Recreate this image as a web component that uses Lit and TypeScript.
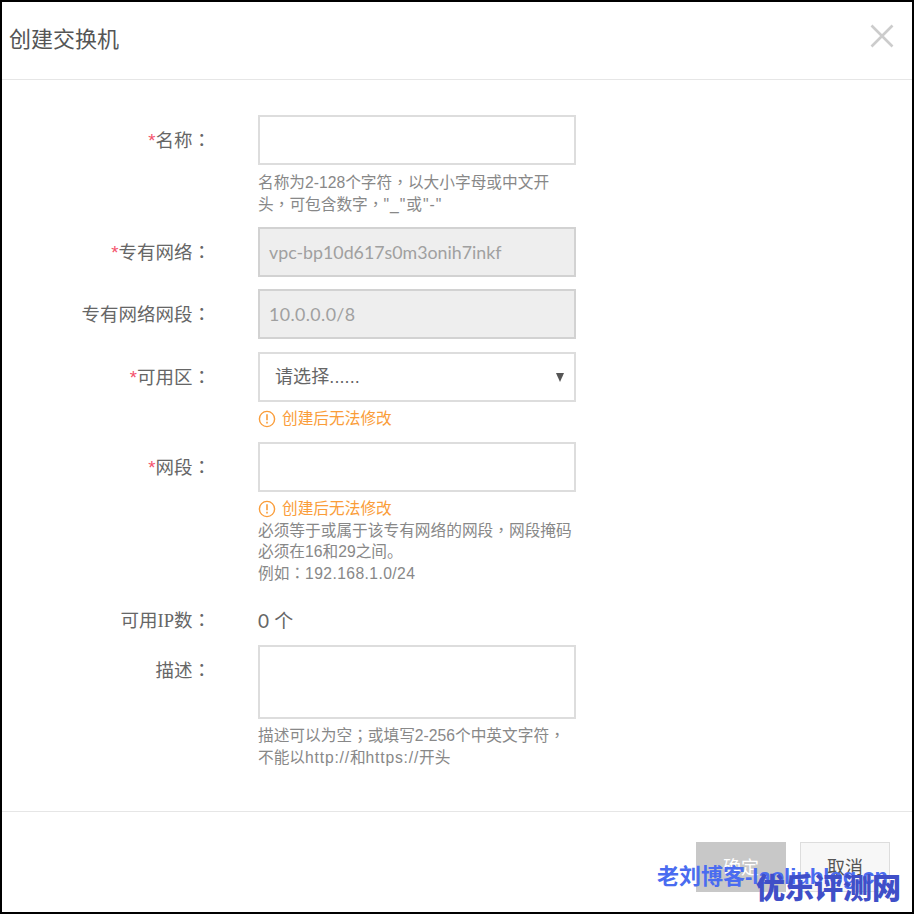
import { LitElement, html, css } from "lit";
import { customElement } from "lit/decorators.js";

const warn = html`<div class="warn"><svg viewBox="0 0 18 18" width="18" height="18"><circle cx="9" cy="9" r="7.6" fill="none" stroke="#fa9d3a" stroke-width="1.4"/><path d="M9 4.2v6M9 11.8v1.8" stroke="#fa9d3a" stroke-width="1.6" fill="none"/></svg><span>创建后无法修改</span></div>`;
const colon = html`<span class="p">：</span>`;
const comma = html`<span class="p">，</span>`;

@customElement("app-root")
export class AppRoot extends LitElement {
  static styles = css`
    :host { display: block; width: 915px; height: 915px; box-sizing: border-box; position: relative; overflow: hidden;
      background: #fff; font-family: "Liberation Sans", "Noto Sans CJK SC", sans-serif; color: #666; }
    .p { font-family: "Noto Sans CJK TC", sans-serif; }
    .s { font-family: "Liberation Serif", "Noto Sans CJK SC", serif; }
    .l { font-family: "Lato", sans-serif; }
    .ls1 { letter-spacing: 0.4px; }
    .ls2 { letter-spacing: 0.8px; }
    .ls3 { letter-spacing: 1px; }
    .dialog { position: absolute; left: 0; top: 0; width: 914px; height: 914px; box-sizing: border-box; border: 2px solid #000; background: #fff; display: flex; flex-direction: column; }
    .head { height: 78px; box-sizing: border-box; border-bottom: 1px solid #e6e6e6; display: flex; align-items: flex-start; justify-content: space-between; padding: 22px 18px 0 7px; flex: none; }
    .title { font-size: 22px; color: #555; line-height: 32px; }
    .close { display: block; }
    .form { flex: none; height: 732px; box-sizing: border-box; padding-top: 35px; display: flex; flex-direction: column; border-bottom: 1px solid #e6e6e6; }
    .row { display: grid; grid-template-columns: 209px 318px; column-gap: 47px; align-items: start; }
    .label { font-size: 18.5px; text-align: right; line-height: 50px; color: #666; height: 50px; margin-top: -1px; white-space: nowrap; }
    .req { color: #f4516c; }
    .box { box-sizing: border-box; width: 318px; height: 50px; border: 2px solid #ddd; background: #fff; font-size: 17.8px; line-height: 46px; padding: 0 9px; color: #a0a0a0; font-family: "Lato", sans-serif; white-space: nowrap; }
    .box.off { background: #eee; border-color: #d2d2d2; }
    .box.wide { letter-spacing: 0.4px; }
    .box.sel { position: relative; padding: 0 15px; color: #666; font-size: 18px; font-family: "Liberation Sans", "Noto Sans CJK SC", sans-serif; letter-spacing: 0.1px; }
    .tri { position: absolute; right: 10px; top: 19px; width: 0; height: 0; border-left: 4.5px solid transparent; border-right: 4.5px solid transparent; border-top: 9px solid #555; }
    .area { height: 74px; }
    .help { font-size: 15.7px; line-height: 21px; color: #888; white-space: nowrap; }
    .warn { display: flex; align-items: center; gap: 6px; color: #fa9d3a; font-size: 15.7px; line-height: 20px; height: 20px; }
    .warn svg { flex: none; }
    .r-name { margin-bottom: 12px; }
    .r-name .help { margin-top: 6px; }
    .r-vpc { margin-bottom: 12px; }
    .r-seg { margin-bottom: 13px; }
    .r-zone .warn { margin-top: 7px; }
    .r-zone { margin-bottom: 13px; }
    .r-net .warn { margin-top: 7px; }
    .r-ip { margin-top: 22px; height: 30px; }
    .r-ip .label { line-height: 30px; height: 30px; margin-top: -2px; }
    .r-ip .val { font-size: 19px; line-height: 30px; color: #666; }
    .r-desc { margin-top: 9px; }
    .r-desc .label { margin-top: -1px; }
    .r-desc .help { margin-top: 5px; line-height: 22px; }
    .foot { flex: 1; display: flex; justify-content: flex-end; align-items: flex-start; gap: 14px; padding: 30px 22px 0 0; }
    .btn { box-sizing: border-box; width: 90px; height: 50px; font-size: 18px; text-align: center; line-height: 50px; border: 1px solid #ddd; background: #f7f7f7; color: #555; }
    .btn.ok { background: #c8c8c8; border-color: #c8c8c8; color: #fff; }
    .mark1 { position: absolute; left: 657px; top: 863px; font-size: 22px; line-height: 28px; font-weight: 700; color: #4a6cf0; white-space: nowrap; }
    .mark2 { position: absolute; left: 756px; top: 868px; font-size: 29px; line-height: 42px; font-weight: 900; color: #3f4fc8; white-space: nowrap; }
  `;

  render() {
    return html`
      <div class="dialog">
        <div class="head">
          <div class="title">创建交换机</div>
          <svg class="close" viewBox="0 0 24 24" width="24" height="24"><path d="M1.5 1.5L22.5 22.5M22.5 1.5L1.5 22.5" stroke="#ccc" stroke-width="2.6" fill="none"/></svg>
        </div>
        <div class="form">
          <div class="row r-name">
            <div class="label"><span class="req">*</span>名称${colon}</div>
            <div>
              <div class="box"></div>
              <div class="help">名称为2-128个字符${comma}以大小字母或中文开<br />头${comma}可包含数字${comma}<span class="ls3">"_"或"-"</span></div>
            </div>
          </div>
          <div class="row r-vpc">
            <div class="label"><span class="req">*</span>专有网络${colon}</div>
            <div class="box off">vpc-bp10d617s0m3onih7inkf</div>
          </div>
          <div class="row r-seg">
            <div class="label">专有网络网段${colon}</div>
            <div class="box off wide">10.0.0.0/8</div>
          </div>
          <div class="row r-zone">
            <div class="label"><span class="req">*</span>可用区${colon}</div>
            <div>
              <div class="box sel">请选择......<span class="tri"></span></div>
              ${warn}
            </div>
          </div>
          <div class="row r-net">
            <div class="label"><span class="req">*</span>网段${colon}</div>
            <div>
              <div class="box"></div>
              ${warn}
              <div class="help">必须等于或属于该专有网络的网段${comma}网段掩码<br />必须在16和29之间。<br />例如${colon}<span class="ls1">192.168.1.0/24</span></div>
            </div>
          </div>
          <div class="row r-ip">
            <div class="label">可用<span class="s">IP</span>数${colon}</div>
            <div class="val"><span class="l">0</span> 个</div>
          </div>
          <div class="row r-desc">
            <div class="label">描述${colon}</div>
            <div>
              <div class="box area"></div>
              <div class="help">描述可以为空<span class="p">；</span>或填写2-256个中英文字符${comma}<br />不能以<span class="ls2">http://</span>和<span class="ls2">https://</span>开头</div>
            </div>
          </div>
        </div>
        <div class="foot">
          <div class="btn ok">确定</div>
          <div class="btn">取消</div>
        </div>
      </div>
      <div class="mark1">老刘博客-laoliublog.cn</div>
      <div class="mark2">优乐评测网</div>
    `;
  }
}
